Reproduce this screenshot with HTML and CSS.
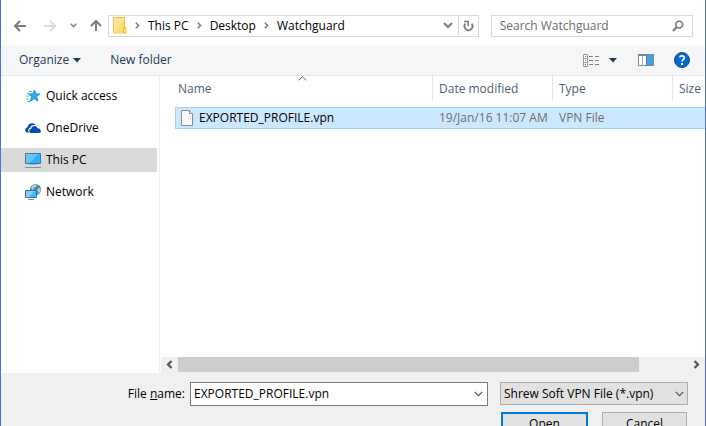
FILE: index.html
```html
<!DOCTYPE html>
<html lang="en">
<head>
<meta charset="utf-8">
<title>Open</title>
<link rel="stylesheet" href="styles.css">
</head>
<body>
<form class="dialog">
  <div class="navbar">
    <button type="button" class="icon-btn nav-back" aria-label="Back"><svg width="14" height="12" viewBox="0 0 14 12"><path d="M13 6H2M7 1L2 6l5 5" fill="none" stroke="#7d7d7d" stroke-width="2"/></svg></button>
    <button type="button" class="icon-btn nav-forward" aria-label="Forward"><svg width="14" height="12" viewBox="0 0 14 12"><path d="M0 6h11M6 1l5 5-5 5" fill="none" stroke="#dcdcdc" stroke-width="2"/></svg></button>
    <button type="button" class="icon-btn nav-recent" aria-label="Recent locations"><svg width="7" height="5" viewBox="0 0 7 5"><path d="M.7.8l2.800 2.800L6.300.8" fill="none" stroke="#858585" stroke-width="1.600"/></svg></button>
    <button type="button" class="icon-btn nav-up" aria-label="Up"><svg width="12" height="13" viewBox="0 0 12 13"><path d="M6 12V2M1 7l5-5 5 5" fill="none" stroke="#7d7d7d" stroke-width="2"/></svg></button>
    <div class="address">
      <svg class="folder" width="14" height="17" viewBox="0 0 14 17"><path d="M.5.5h11v15.500H.5z" fill="#ffe58f" stroke="#edc04c"/><path d="M1 16L11 2v14z" fill="#fbdc77"/><path d="M10.500 10.500h2.500v5.500h-2.500z" fill="#ffe58f" stroke="#e9b83e"/></svg>
      <svg class="crumb-arrow" width="5" height="7" viewBox="0 0 5 7"><path d="M.8.7l2.800 2.800L.8 6.300" fill="none" stroke="#777" stroke-width="1.500"/></svg>
      <a href="#pc">This PC</a>
      <svg class="crumb-arrow" width="5" height="7" viewBox="0 0 5 7"><path d="M.8.7l2.800 2.800L.8 6.300" fill="none" stroke="#777" stroke-width="1.500"/></svg>
      <a href="#desktop">Desktop</a>
      <svg class="crumb-arrow" width="5" height="7" viewBox="0 0 5 7"><path d="M.8.7l2.800 2.800L.8 6.300" fill="none" stroke="#777" stroke-width="1.500"/></svg>
      <a href="#watchguard">Watchguard</a>
      <button type="button" class="icon-btn address-drop" aria-label="Previous locations"><svg width="10" height="7" viewBox="0 0 10 7"><path d="M1 1l4 4 4-4" fill="none" stroke="#7d7d7d" stroke-width="2"/></svg></button>
      <button type="button" class="icon-btn refresh" aria-label="Refresh"><svg width="11" height="12" viewBox="0 0 11 12"><path d="M8.600 3.600A4 4 0 1 1 2.400 3.600" fill="none" stroke="#7d7d7d" stroke-width="1.800"/><path d="M1 1.500h4.200V6" fill="none" stroke="#7d7d7d" stroke-width="1.600"/></svg></button>
    </div>
    <div class="search">
      <input type="text" aria-label="Search Watchguard" placeholder="Search Watchguard">
      <svg width="12" height="12" viewBox="0 0 12 12"><circle cx="7.200" cy="4.600" r="3.400" fill="none" stroke="#777" stroke-width="1.600"/><path d="M4.800 7L1 11" stroke="#777" stroke-width="2"/></svg>
    </div>
  </div>

  <div class="toolbar">
    <button type="button" class="text-btn organize">Organize <svg width="8" height="5" viewBox="0 0 8 5"><path d="M0 0h8L4 4.500z" fill="#1e395b"/></svg></button>
    <button type="button" class="text-btn">New folder</button>
    <button type="button" class="icon-btn view-btn" aria-label="Change your view"><svg width="17" height="13" viewBox="0 0 17 13"><path d="M.5.5h4v12h-4zM.5 4.500h4M.5 8.500h4" fill="#fff" stroke="#999"/><path d="M2 2h1v1H2z" fill="#555"/><path d="M2 6h1v1H2z" fill="#3c8fd0"/><path d="M2 10h1v1H2z" fill="#c33"/><path d="M6 2.500h4M12 2.500h4M6 6.500h4M12 6.500h4M6 10.500h4M12 10.500h4" stroke="#858585"/></svg></button>
    <button type="button" class="icon-btn view-menu" aria-label="More options"><svg width="8" height="5" viewBox="0 0 8 5"><path d="M0 0h8L4 4.500z" fill="#1e395b"/></svg></button>
    <button type="button" class="icon-btn preview" aria-label="Show the preview pane"><svg width="16" height="12" viewBox="0 0 16 12"><path d="M.5.5h15v11H.5z" fill="#fff" stroke="#868686"/><path d="M0 0h16v2H0z" fill="#868686"/><path d="M4.500 2v10" stroke="#aaa"/><path d="M9 1h6v10H9z" fill="#46a0e6"/><path d="M8.500 1v11" stroke="#2f7fc4"/></svg></button>
    <button type="button" class="icon-btn help" aria-label="Get help"><svg width="16" height="16" viewBox="0 0 16 16"><circle cx="8" cy="8" r="7.500" fill="#0069cc" stroke="#1a4c8c"/><path d="M5.700 5.500C6 3.200 10.500 3.200 10.300 6c-.1 1.500-2.300 1.600-2.300 3.600" fill="none" stroke="#fff" stroke-width="1.700"/><path d="M7 11h2v2H7z" fill="#fff"/></svg></button>
  </div>

  <div class="content">
    <nav class="sidebar">
      <a href="#quick"><svg width="16" height="16" viewBox="0 0 16 16"><path d="M9.500 2l1.300 3.800 4.200.2-3.300 2.600 1.200 4.600-3.700-2.500L5 13.500l1.600-4.600L3.500 6l4.100-.2z" fill="#35a8ec" stroke="#1f87cf" stroke-width=".8"/><path d="M4 3.500h3M2 5.500h2M1 8h3M1 11h3M2 13.500h3" stroke="#55b4ea"/></svg>Quick access</a>
      <a href="#onedrive"><svg width="16" height="16" viewBox="0 0 16 16"><path d="M1.500 12.500C-.8 10.500.2 7.700 2.600 7.300 3 3.200 8.500 1.800 10.600 5.200 7.500 4.300 5.600 5.800 5.200 7.800 3 8.300 2.700 11 4 12.500z" fill="#0a4cb0"/><path d="M6 13c-2.600-.5-2.300-4 .2-4C6.500 5.500 11.500 5 12.500 8.200c2.200-.1 3.100 1.300 2.800 2 1.300 1 .6 2.800-.8 2.800z" fill="#0a4cb0"/></svg>OneDrive</a>
      <a href="#thispc" class="selected" aria-current="page"><svg width="16" height="16" viewBox="0 0 16 16"><path d="M.5 1.500h15v10H.5z" fill="#32adf8" stroke="#3d7c9f"/><path d="M1 2h12L5 11H1z" fill="#65c5ff"/><path d="M4 12.500h8" stroke="#a5bac7"/><path d="M0 15.500h16" stroke="#7993a3"/></svg>This PC</a>
      <a href="#network"><svg width="16" height="16" viewBox="0 0 16 16"><circle cx="10.500" cy="5.500" r="5.500" fill="#53849e"/><path d="M6 4c1-3 4-4 6-3.500L11 3 8.500 4 8 7zM12 5l3-1 .5 3-2 2.500z" fill="#afd2dc"/><path d="M.5 6.500h11v7H.5z" fill="#48b5f3" stroke="#2d789f"/><path d="M1 7h9l-6 6H1z" fill="#7fd0ff"/><path d="M3 15.500h6" stroke="#7996a7"/></svg>Network</a>
    </nav>
    <div class="files">
      <div class="list">
        <svg class="sort" width="9" height="5" viewBox="0 0 9 5"><path d="M.7 4.300L4.500.7l3.800 3.600" fill="none" stroke="#606060"/></svg>
        <table>
          <colgroup><col class="col-name"><col class="col-fact"><col class="col-fact"><col></colgroup>
          <thead><tr><th>Name</th><th>Date modified</th><th>Type</th><th>Size</th></tr></thead>
          <tbody><tr>
            <td><span class="file"><svg width="12" height="16" viewBox="0 0 12 16"><path d="M.5.5h8l3 3v12H.5z" fill="#f8f8f8" stroke="#8b8b8b"/><path d="M8.500.5v3h3" fill="#fff" stroke="#8b8b8b"/></svg>EXPORTED_PROFILE.vpn</span></td>
            <td>19/Jan/16 11:07 AM</td><td>VPN File</td><td></td>
          </tr></tbody>
        </table>
      </div>
      <div class="scrollbar">
        <button type="button" class="icon-btn" aria-label="Scroll left"><svg width="7" height="9" viewBox="0 0 7 9"><path d="M5.500 1L2 4.500 5.500 8" fill="none" stroke="#555" stroke-width="2.200"/></svg></button>
        <div class="track"><div class="thumb"></div></div>
        <button type="button" class="icon-btn" aria-label="Scroll right"><svg width="7" height="9" viewBox="0 0 7 9"><path d="M1.500 1L5 4.500 1.500 8" fill="none" stroke="#555" stroke-width="2.200"/></svg></button>
      </div>
    </div>
  </div>

  <div class="footer">
    <label for="filename">File <u>n</u>ame:</label>
    <div class="combo">
      <input id="filename" type="text" value="EXPORTED_PROFILE.vpn">
      <button type="button" class="icon-btn" aria-label="Recent file names"><svg width="9" height="6" viewBox="0 0 9 6"><path d="M.7.8l3.800 3.800L8.300.8" fill="none" stroke="#555" stroke-width="1.200"/></svg></button>
    </div>
    <div class="side">
      <div class="filter">
        <select aria-label="File type"><option>Shrew Soft VPN File (*.vpn)</option></select>
        <svg width="9" height="6" viewBox="0 0 9 6"><path d="M.7.8l3.800 3.800L8.300.8" fill="none" stroke="#555" stroke-width="1.200"/></svg>
      </div>
      <div class="actions">
        <button type="submit" class="push primary">Open</button>
        <button type="button" class="push">Cancel</button>
      </div>
    </div>
  </div>
</form>
</body>
</html>
```
FILE: styles.css
```css
* { box-sizing: border-box; }

body {
  margin: 0;
  overflow: hidden;
  background: #fff;
  color: #000;
  font: 12px/16px "Open Sans", "Noto Sans", sans-serif;
}

button, input, select { font: inherit; color: inherit; border-radius: 0; }
button { padding: 0; border: 0; background: none; }
a { color: inherit; text-decoration: none; }
svg { display: block; flex: none; }

.dialog {
  border-left: 1px solid #5470be;
  border-right: 1px solid #5470be;
}

.icon-btn {
  display: flex;
  align-items: center;
  justify-content: center;
  flex: none;
}

/* Navigation row */
.navbar {
  display: flex;
  align-items: center;
  height: 45px;
  padding: 6px 12px 0;
}
.nav-forward { margin-left: 17px; }
.nav-recent { margin-left: 12px; }
.nav-up { margin-left: 13px; }

.address {
  display: flex;
  align-items: center;
  flex: 370 1 370px;
  min-width: 0;
  height: 22px;
  margin: 0 12px 0 6px;
  padding-left: 4px;
  border: 1px solid #d9d9d9;
}
.address a { margin: 0 8px; white-space: nowrap; }
.folder { margin-right: 8px; }
.address-drop { width: 20px; height: 20px; margin-left: auto; }
.refresh { width: 20px; height: 20px; border-left: 1px solid #d9d9d9; }

.search {
  display: flex;
  align-items: center;
  flex: 202 1 202px;
  min-width: 0;
  height: 22px;
  padding: 0 8px;
  border: 1px solid #d9d9d9;
}
.search input {
  flex: 1;
  min-width: 0;
  padding: 0;
  border: 0;
  outline: 0;
  background: none;
}
.search input::placeholder { color: #6d6d6d; opacity: 1; }

/* Command bar */
.toolbar {
  display: flex;
  align-items: center;
  height: 31px;
  padding: 0 15px 0 18px;
  background: #f5f6f7;
  border-bottom: 1px solid #e6e7e8;
}
.text-btn { display: flex; align-items: center; color: #1e395b; }
.organize { gap: 4px; margin-right: 29px; }
.view-btn { margin-left: auto; }
.view-menu { margin-left: 9px; }
.preview { margin-left: 21px; }
.help { margin-left: 20px; }

/* Sidebar and file list */
.content { display: flex; }

.sidebar {
  display: flex;
  flex-direction: column;
  gap: 8px;
  flex: none;
  width: 159px;
  padding: 8px 2px 0 0;
  border-right: 1px solid #f0f0f0;
}
.sidebar a {
  display: flex;
  align-items: center;
  gap: 5px;
  height: 24px;
  padding-left: 24px;
}
.sidebar .selected { background: #d9d9d9; }

.files { flex: 1; min-width: 0; padding-left: 1px; }
.list { position: relative; min-height: 281px; padding-left: 14px; }
.sort { position: absolute; left: 137px; top: 0; }

table {
  width: 100%;
  table-layout: fixed;
  border-spacing: 0;
}
.col-name { width: 258px; }
.col-fact { width: 120px; }
th {
  height: 25px;
  padding: 0 0 0 6px;
  border-right: 1px solid #e5e5e5;
  color: #4c607a;
  font-weight: 400;
  text-align: left;
}
th:first-child { padding-left: 3px; }
th:last-child { border-right: 0; }
tbody::before { content: ""; display: block; height: 6px; }
td {
  height: 22px;
  padding: 0 0 0 6px;
  background: #cce8ff;
  border: solid #99d1ff;
  border-width: 1px 0;
  color: #6d6d6d;
  white-space: nowrap;
}
td:first-child { padding-left: 5px; border-left-width: 1px; color: #000; }
.file { display: flex; align-items: center; gap: 6px; }

.scrollbar { display: flex; height: 16px; background: #f0f0f0; }
.scrollbar .icon-btn { width: 17px; height: 15px; }
.track { flex: 1; }
.thumb { width: 90.4%; height: 15px; background: #cdcdcd; }

/* File name, type and actions */
.footer {
  display: flex;
  align-items: flex-start;
  padding: 9px 17px 16px;
  background: #f0f0f0;
}
.footer label { flex: 172 1 172px; padding: 4px 5px 0 0; text-align: right; }
.combo {
  display: flex;
  flex: 298 1 298px;
  min-width: 0;
  height: 24px;
  margin-right: 12px;
  background: #fff;
  border: 1px solid #7a7a7a;
}
.combo input {
  flex: 1;
  min-width: 0;
  padding: 0 3px;
  border: 0;
  outline: 0;
  background: none;
}
.combo .icon-btn { width: 17px; }

.side { flex: 188 1 188px; min-width: 0; }
.filter { position: relative; }
.filter select {
  appearance: none;
  display: block;
  width: 100%;
  height: 23px;
  padding: 0 20px 0 3px;
  background: #e1e1e1;
  border: 1px solid #adadad;
}
.filter svg { position: absolute; right: 4px; top: 9px; pointer-events: none; }

.actions { display: flex; gap: 14px; margin: 7px 1px 0; }
.push {
  flex: 1;
  height: 23px;
  background: #e1e1e1;
  border: 1px solid #adadad;
}
.primary { border: 2px solid #0078d7; }
```
